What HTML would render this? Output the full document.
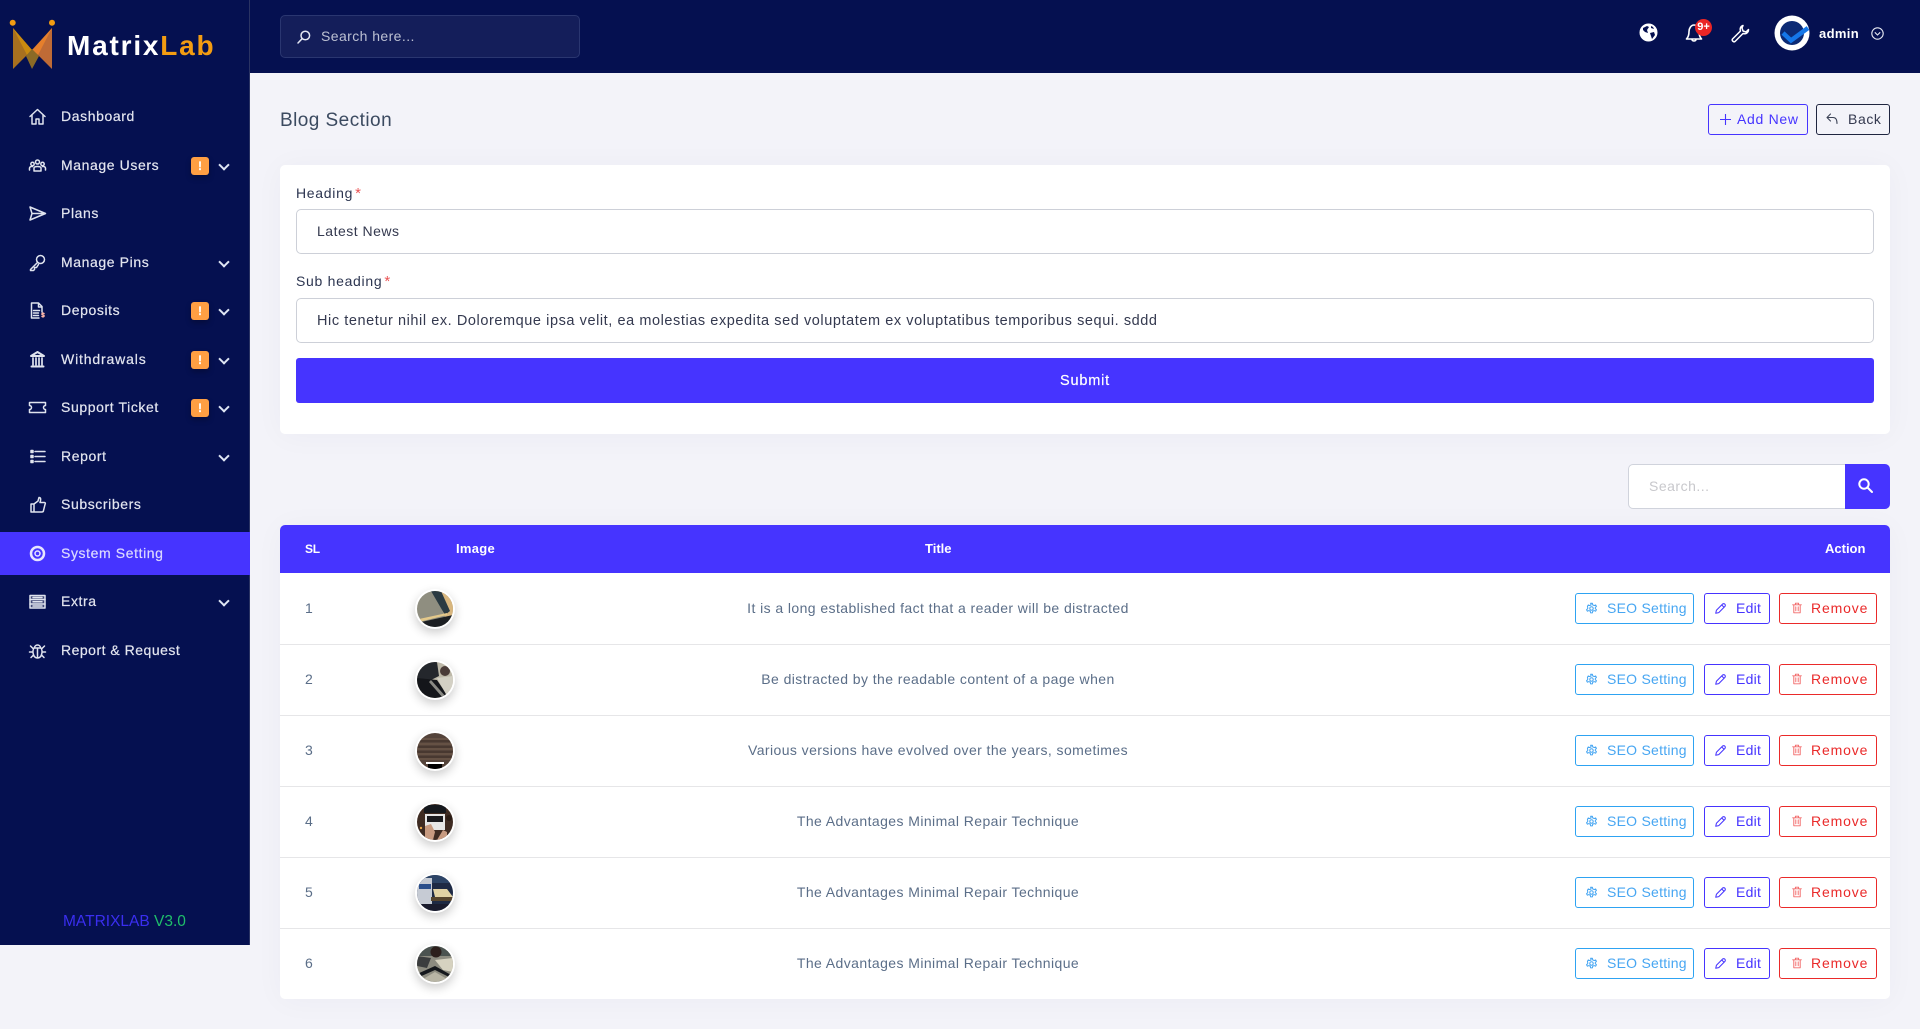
<!DOCTYPE html>
<html lang="en"><head><meta charset="utf-8"><title>Blog Section</title>
<style>
*{box-sizing:border-box;margin:0;padding:0}
html,body{width:1920px;height:1029px;overflow:hidden;background:#f3f3f9;font-family:"Liberation Sans",sans-serif}
.a{position:absolute;white-space:nowrap}
svg{position:absolute;overflow:visible}
#side{position:absolute;left:0;top:0;width:250px;height:945px;background:#051050;border-right:1px solid #2a3363}
#top{position:absolute;left:250px;top:0;width:1670px;height:73px;background:#051050}
.ni{position:absolute;left:0;width:250px;height:43px;color:#e3e5ef;font-size:14px;line-height:43px;-webkit-text-stroke:.2px}
.ni span{position:absolute;left:61px;letter-spacing:.6px;font-weight:400}
.ni svg{left:28px;top:12px;width:19px;height:19px;fill:none;stroke:#dfe3ee;stroke-width:1.5;stroke-linecap:round;stroke-linejoin:round}
.ni b{position:absolute;left:191px;top:13px;width:18px;height:18px;border-radius:3px;background:#ff9f43;color:#fff;font-size:12px;line-height:18px;text-align:center;box-shadow:0 3px 6px rgba(0,0,0,.25)}
.ni i{position:absolute;left:218px;top:20px;width:11px;height:7px}
.ni i:before{content:"";position:absolute;left:2px;top:-3px;width:6px;height:6px;border-right:2px solid #dfe6f4;border-bottom:2px solid #dfe6f4;transform:rotate(45deg)}
.card{position:absolute;left:280px;width:1610px;background:#fff;border-radius:5px;box-shadow:0 2px 30px rgba(40,40,90,.035)}
.inp{position:absolute;left:296px;width:1578px;height:45px;border:1px solid #cdd0d8;border-radius:5px;background:#fff;color:#34394f;font-size:14px;line-height:43px;padding-left:20px;white-space:nowrap}
.lbl{position:absolute;left:296px;color:#2c3550;font-size:14px;line-height:20px;letter-spacing:.7px}
.lbl em{color:#ea5455;font-style:normal;margin-left:2px;font-size:15px}
.row{position:absolute;left:280px;width:1610px;height:72px;border-bottom:1px solid #e6e6e8}
.num{position:absolute;left:25px;top:0;line-height:70px;font-size:14px;color:#5b6e88}
.av{position:absolute;left:135px;top:16px;width:40px;height:40px;border-radius:50%;background:#fff;box-shadow:0 4px 10px rgba(0,0,0,.2)}
.av svg{left:2px;top:2px;width:36px;height:36px}
.tt{position:absolute;left:358px;width:600px;text-align:center;top:0;line-height:70px;font-size:14px;letter-spacing:.42px;color:#5b6e88;white-space:nowrap}
.bt{position:absolute;top:20px;height:31px;border:1px solid;border-radius:3px;font-size:14px;line-height:29px;letter-spacing:.25px;white-space:nowrap}
.bt span{position:absolute}
.bt svg{top:8px;width:13px;height:13px;fill:none;stroke:currentColor;stroke-width:1.2;stroke-linecap:round;stroke-linejoin:round}
.s{left:1295px;width:119px;color:#47a6f2;border-color:#2ea3f2}
.s span{left:31px}.s svg{left:9px}
.e{left:1424px;width:66px;color:#4634ff;border-color:#4634ff}
.e span{left:31px}.e svg{left:9px}
.r{left:1499px;width:98px;color:#ea2a2a;border-color:#ea2a2a;letter-spacing:.85px}
.r span{left:31px}.r svg{left:11px;width:12px;height:12px}
</style></head><body>

<div id="top"></div>
<div id="side"></div>

<svg style="left:0;top:0" width="70" height="80" viewBox="0 0 70 80">
<circle cx="12.700" cy="22.700" r="3" fill="#f39c12"/><circle cx="52" cy="22.700" r="3" fill="#f39c12"/>
<polygon points="13,28 13,69 32,50" fill="#a8701f"/>
<polygon points="52,28 52,69 33,50" fill="#bf6b36"/>
<polygon points="13,28 32,50 27,55" fill="#c98a10"/>
<polygon points="52,28 32,50 38,55" fill="#e57f2c"/>
<polygon points="26,56 32,49 39,56 32,69" fill="#8b6a26"/>
</svg>
<div class="a" style="left:67px;top:28px;font-size:28px;line-height:36px;letter-spacing:1.800px;font-weight:700;color:#fff">Matrix<span style="color:#f39c12">Lab</span></div>

<div class="ni" style="top:95px"><svg viewBox="0 0 19 19"><path d="M2 9.500 9.500 2.500 17 9.500M4 8v9h4v-5h3v5h4V8"/></svg><span>Dashboard</span></div>
<div class="ni" style="top:144px"><svg viewBox="0 0 19 19"><circle cx="9.500" cy="6" r="2"/><circle cx="4.500" cy="8" r="1.700"/><circle cx="14.500" cy="8" r="1.700"/><path d="M6 15v-3c0-2 7-2 7 0v3zM1.500 14v-2c0-1 2-2 3-1.500M17.500 14v-2c0-1-2-2-3-1.500"/></svg><span>Manage Users</span><b>!</b><i></i></div>
<div class="ni" style="top:192px"><svg viewBox="0 0 19 19"><path d="M2 3 17.500 9.500 2 16 4 9.500zM4 9.500h13"/></svg><span>Plans</span></div>
<div class="ni" style="top:241px"><svg viewBox="0 0 19 19"><circle cx="12.500" cy="6.500" r="4"/><path d="M9.500 9.500 2.500 16.500v1h3l1-1v-2h2l2-3"/></svg><span>Manage Pins</span><i></i></div>
<div class="ni" style="top:289px"><svg viewBox="0 0 19 19"><path d="M3.500 17V2h7l3.500 3.500V11M10.500 2v4H14M3.500 17H11M5.500 9.500h6M5.500 12h5M5.500 14.500h5"/><path d="M16 12.500c-2-1-3 1-1 1.500s1 2.500-1 1.500" stroke="#ffb7a8"/></svg><span>Deposits</span><b>!</b><i></i></div>
<div class="ni" style="top:338px"><svg viewBox="0 0 19 19"><path d="M9.500 2 16 6H3zM3.500 16.500h12" stroke-width="2"/><path d="M5 8v7M8 8v7M11 8v7M14 8v7" stroke-width="1.700"/></svg><span style="letter-spacing:.85px">Withdrawals</span><b>!</b><i></i></div>
<div class="ni" style="top:386px"><svg viewBox="0 0 19 19"><path d="M1.500 4.500h16v3a2 2 0 0 0 0 4v3h-16v-3a2 2 0 0 0 0-4z"/></svg><span>Support Ticket</span><b>!</b><i></i></div>
<div class="ni" style="top:435px"><svg viewBox="0 0 19 19"><path d="M7 4.500h10M7 9.500h10M7 14.500h10"/><path d="M3 3.500h2v2H3zM3 8.500h2v2H3zM3 13.500h2v2H3z" fill="#dfe3ee"/></svg><span>Report</span><i></i></div>
<div class="ni" style="top:483px"><svg viewBox="0 0 19 19"><path d="M3 9h3v8H3zM6 9l4-3 1-3.500c2 0 2 2 1 5h4.500c1 0 1 1 .5 2l-1.500 6c0 1-1 1.500-2 1.500H6"/></svg><span>Subscribers</span></div>
<div class="ni" style="top:532px;background:#4634ff;color:#dcd9ff"><svg viewBox="0 0 19 19" style="stroke:#e6e4ff"><circle cx="9.500" cy="9.500" r="6.500" stroke-width="2.500"/><circle cx="9.500" cy="9.500" r="2.500" stroke-width="1.500"/></svg><span>System Setting</span></div>
<div class="ni" style="top:580px"><svg viewBox="0 0 19 19"><rect x="2" y="3.500" width="15" height="12.500" fill="#cfd2dc" fill-opacity=".3"/><path d="M2 7.500h15M2 12h15M5 5.500h9M5 9.800h9M5 14h9"/></svg><span>Extra</span><i></i></div>
<div class="ni" style="top:629px"><svg viewBox="0 0 19 19"><path d="M6 7h7c2 3 1 10-3.500 10S4 10 6 7zM6.500 7c0-4 6-4 6 0M9.500 8v9M2.500 5l3 3M16.500 5l-3 3M1.500 11h3M17.500 11h-3M3 16.500l2.500-2.500M16 16.500 13.500 14"/></svg><span style="letter-spacing:.5px">Report &amp; Request</span></div>

<div class="a" style="left:63px;top:912px;font-size:15.500px;line-height:20px;color:#3a2ef0">MATRIXLAB <span style="color:#1fbf6a">V3.0</span></div>

<!-- top search -->
<div class="a" style="left:280px;top:15px;width:300px;height:43px;background:#141e5a;border:1px solid #2a3670;border-radius:5px"></div>
<svg style="left:297px;top:30px" width="14" height="14" viewBox="0 0 14 14" fill="none" stroke="#e3e6f2" stroke-width="1.500" stroke-linecap="round"><circle cx="8.300" cy="5.500" r="4.300"/><path d="M5 8.800 1 13"/></svg>
<div class="a" style="left:321px;top:26px;font-size:14px;line-height:20px;letter-spacing:.42px;color:#bcc0d2">Search here...</div>

<!-- top right icons -->
<svg style="left:1639px;top:23px" width="19" height="19" viewBox="0 0 19 19"><circle cx="9.500" cy="9.500" r="9" fill="#fff"/><path d="M4 5 8 3l2 1-2 3 1 3-3-1-2-2zM11 10l4-1 1 3-3 4-1-3zM12 3l2 1 1 2-3-1z" fill="#051050"/></svg>
<svg style="left:1684px;top:22px" width="20" height="20" viewBox="0 0 20 20" fill="none" stroke="#fff" stroke-width="1.600" stroke-linecap="round" stroke-linejoin="round"><path d="M2.500 17h15c-2-2-2.500-4-2.500-7.500 0-3-2-6.500-5-6.500S5 6.500 5 9.500c0 3.500-.5 5.500-2.500 7.500zM8 17.500c0 2 4 2 4 0"/></svg>
<div class="a" style="left:1695px;top:19px;width:17px;height:17px;border-radius:50%;background:#ea2525;color:#fff;font-size:11px;line-height:17px;text-align:center;font-weight:700">9+</div>
<svg style="left:1731px;top:24px" width="19" height="19" viewBox="0 0 19 19" fill="none" stroke="#fff" stroke-width="1.500" stroke-linecap="round" stroke-linejoin="round"><path d="M12 1.500c-2 .5-3.500 3-2.500 5.500L1.500 15c-1 1.500 1 3.500 2.500 2.500L12 9.500c3 1 5.500-1 5.500-4L15 8l-3-1-1-3z"/></svg>
<svg style="left:1774px;top:15px" width="36" height="36" viewBox="0 0 36 36"><circle cx="18" cy="18" r="17.500" fill="#fff"/><circle cx="18" cy="18" r="12" fill="#0c2a74"/><path d="M9 18l8 7.500L34 13" fill="none" stroke="#1577e8" stroke-width="4.500"/></svg>
<div class="a" style="left:1819px;top:24px;font-size:13px;line-height:20px;font-weight:700;color:#fff;letter-spacing:.35px">admin</div>
<svg style="left:1871px;top:27px" width="13" height="13" viewBox="0 0 13 13" fill="none" stroke="#e6e8f2" stroke-width="1.100"><circle cx="6.500" cy="6.500" r="5.700"/><path d="M3.800 5.300 6.500 8l2.700-2.700"/></svg>

<!-- title -->
<div class="a" style="left:280px;top:109px;font-size:19px;line-height:24px;color:#3b4a60;letter-spacing:.45px">Blog Section</div>
<div class="a" style="left:1708px;top:104px;width:100px;height:31px;border:1px solid #4634ff;border-radius:3px;background:transparent"></div>
<svg style="left:1719px;top:113px" width="13" height="13" viewBox="0 0 13 13" stroke="#4634ff" stroke-width="1.100"><path d="M6.500 1v11M1 6.500h11"/></svg>
<div class="a" style="left:1737px;top:109px;font-size:14px;line-height:20px;color:#4634ff;letter-spacing:.7px">Add New</div>
<div class="a" style="left:1816px;top:104px;width:74px;height:31px;border:1px solid #1f2540;border-radius:3px"></div>
<svg style="left:1826px;top:113px" width="12" height="12" viewBox="0 0 12 12" fill="none" stroke="#3c4356" stroke-width="1.100" stroke-linecap="round" stroke-linejoin="round"><path d="M4.500 1 1 4.500 4.500 8M1 4.500h6c3 0 4 2.500 4 6"/></svg>
<div class="a" style="left:1848px;top:109px;font-size:14px;line-height:20px;color:#34394f;letter-spacing:.6px">Back</div>

<!-- form -->
<div class="card" style="top:165px;height:269px"></div>
<div class="lbl" style="top:183px">Heading<em>*</em></div>
<div class="inp" style="top:209px;letter-spacing:.5px">Latest News</div>
<div class="lbl" style="top:271px">Sub heading<em>*</em></div>
<div class="inp" style="top:298px;font-size:14.500px;line-height:45px;letter-spacing:.57px">Hic tenetur nihil ex. Doloremque ipsa velit, ea molestias expedita sed voluptatem ex voluptatibus temporibus sequi. sddd</div>
<div class="a" style="left:296px;top:358px;width:1578px;height:45px;background:#4634ff;border-radius:3px;color:#fff;font-size:14.500px;line-height:47px;text-align:center;letter-spacing:.8px;-webkit-text-stroke:.2px">Submit</div>

<!-- search box -->
<div class="a" style="left:1628px;top:464px;width:220px;height:45px;background:#fff;border:1px solid #d0d3dc;border-radius:5px 0 0 5px;color:#c8c8cc;font-size:14px;line-height:43px;padding-left:20px;letter-spacing:.5px">Search...</div>
<div class="a" style="left:1845px;top:464px;width:45px;height:45px;background:#4634ff;border-radius:0 5px 5px 0"></div>
<svg style="left:1858px;top:478px" width="15" height="15" viewBox="0 0 15 15" fill="none" stroke="#fff" stroke-width="2" stroke-linecap="round"><circle cx="6" cy="6" r="4.700"/><path d="M9.500 9.500 14 14"/></svg>

<!-- table -->
<div class="card" style="top:525px;height:474px"></div>
<div class="a" style="left:280px;top:525px;width:1610px;height:48px;background:#4634ff;border-radius:5px 5px 0 0"></div>
<div class="a" style="left:305px;top:539px;font-size:12px;line-height:20px;font-weight:700;color:#fff;letter-spacing:-.2px">SL</div>
<div class="a" style="left:456px;top:539px;font-size:13px;line-height:20px;font-weight:700;color:#fff;letter-spacing:.3px">Image</div>
<div class="a" style="left:925px;top:539px;font-size:13px;line-height:20px;font-weight:700;color:#fff">Title</div>
<div class="a" style="left:1825px;top:539px;font-size:13px;line-height:20px;font-weight:700;color:#fff">Action</div>

<div class="row" style="top:573px"><div class="num">1</div>
<div class="av"><svg viewBox="0 0 36 36"><defs><clipPath id="c"><circle cx="18" cy="18" r="18"/></clipPath></defs><g clip-path="url(#c)"><rect width="36" height="36" fill="#8f8e80"/><polygon points="18,0 36,0 36,24 28,26" fill="#d8b67e"/><polygon points="14,0 24,0 33,20 28,24" fill="#2a3a42"/><polygon points="0,32 36,24 36,36 0,36" fill="#1c1f22"/><polygon points="2,28 30,22 30,24 2,31" fill="#e3c88a"/></g></svg></div>
<div class="tt">It is a long established fact that a reader will be distracted</div>
<div class="bt s"><svg viewBox="0 0 15 15"><circle cx="7.500" cy="7.500" r="2"/><path d="M6.500 1.500h2l.4 1.800 1.600.8 1.700-.7 1 1.700-1.300 1.300v1.200l1.300 1.300-1 1.700-1.700-.7-1.600.8-.4 1.800h-2l-.4-1.800-1.600-.8-1.700.7-1-1.700 1.300-1.300V6.400L2.800 5.100l1-1.700 1.700.7 1.600-.8z"/></svg><span>SEO Setting</span></div>
<div class="bt e"><svg viewBox="0 0 15 15"><path d="M2 13l.8-3.500 7-7a1.500 1.500 0 0 1 2.700 2.700l-7 7zM9 3.500l2.500 2.500"/></svg><span>Edit</span></div>
<div class="bt r"><svg viewBox="0 0 15 15" style="stroke:#f26a6a"><path d="M2 3.500h11M5.500 3.500V1.500h4v2M3.500 3.500v10h8v-10M6 6v5M9 6v5"/></svg><span>Remove</span></div></div>

<div class="row" style="top:644px"><div class="num">2</div>
<div class="av"><svg viewBox="0 0 36 36"><defs><clipPath id="c2"><circle cx="18" cy="18" r="18"/></clipPath></defs><g clip-path="url(#c2)"><rect width="36" height="36" fill="#bdb8a8"/><polygon points="0,0 20,0 22,14 6,22 0,16" fill="#24272c"/><polygon points="0,16 20,18 32,36 0,36" fill="#14161a"/><circle cx="28" cy="9" r="5" fill="#4a3c38"/><polygon points="20,16 36,14 36,30 30,34" fill="#d3d0c4"/><polygon points="14,18 30,36 26,36 12,20" fill="#8a8a84"/></g></svg></div>
<div class="tt">Be distracted by the readable content of a page when</div>
<div class="bt s"><svg viewBox="0 0 15 15"><circle cx="7.500" cy="7.500" r="2"/><path d="M6.500 1.500h2l.4 1.800 1.600.8 1.700-.7 1 1.700-1.300 1.300v1.200l1.300 1.300-1 1.700-1.700-.7-1.600.8-.4 1.800h-2l-.4-1.800-1.600-.8-1.700.7-1-1.700 1.300-1.300V6.400L2.800 5.100l1-1.700 1.700.7 1.600-.8z"/></svg><span>SEO Setting</span></div>
<div class="bt e"><svg viewBox="0 0 15 15"><path d="M2 13l.8-3.500 7-7a1.500 1.500 0 0 1 2.700 2.700l-7 7zM9 3.500l2.500 2.500"/></svg><span>Edit</span></div>
<div class="bt r"><svg viewBox="0 0 15 15" style="stroke:#f26a6a"><path d="M2 3.500h11M5.500 3.500V1.500h4v2M3.500 3.500v10h8v-10M6 6v5M9 6v5"/></svg><span>Remove</span></div></div>

<div class="row" style="top:715px"><div class="num">3</div>
<div class="av"><svg viewBox="0 0 36 36"><defs><clipPath id="c3"><circle cx="18" cy="18" r="18"/></clipPath></defs><g clip-path="url(#c3)"><rect width="36" height="36" fill="#54433a"/><path d="M0 6h36M0 11h36M0 16h36M0 21h36M0 26h36" stroke="#6b5648" stroke-width="1.500"/><path d="M0 8h36M0 14h36M0 19h36M0 24h36" stroke="#3d2e26" stroke-width="1"/><rect x="11" y="31" width="14" height="5" fill="#000"/><rect x="9" y="29" width="18" height="2" fill="#fff"/></g></svg></div>
<div class="tt">Various versions have evolved over the years, sometimes</div>
<div class="bt s"><svg viewBox="0 0 15 15"><circle cx="7.500" cy="7.500" r="2"/><path d="M6.500 1.500h2l.4 1.800 1.600.8 1.700-.7 1 1.700-1.300 1.300v1.200l1.300 1.300-1 1.700-1.700-.7-1.600.8-.4 1.800h-2l-.4-1.800-1.600-.8-1.700.7-1-1.700 1.300-1.300V6.400L2.800 5.100l1-1.700 1.700.7 1.600-.8z"/></svg><span>SEO Setting</span></div>
<div class="bt e"><svg viewBox="0 0 15 15"><path d="M2 13l.8-3.500 7-7a1.500 1.500 0 0 1 2.700 2.700l-7 7zM9 3.500l2.500 2.500"/></svg><span>Edit</span></div>
<div class="bt r"><svg viewBox="0 0 15 15" style="stroke:#f26a6a"><path d="M2 3.500h11M5.500 3.500V1.500h4v2M3.500 3.500v10h8v-10M6 6v5M9 6v5"/></svg><span>Remove</span></div></div>

<div class="row" style="top:786px"><div class="num">4</div>
<div class="av"><svg viewBox="0 0 36 36"><defs><clipPath id="c4"><circle cx="18" cy="18" r="18"/></clipPath></defs><g clip-path="url(#c4)"><rect width="36" height="36" fill="#3e2b22"/><rect x="7" y="1" width="22" height="8" fill="#15181d"/><rect x="8" y="10" width="20" height="16" fill="#e6e6e6"/><rect x="10" y="12" width="16" height="6" fill="#1a1a1e"/><polygon points="8,22 14,20 18,28 16,36 8,36" fill="#c79a80"/><polygon points="26,26 30,28 30,36 20,36" fill="#c79a80"/><circle cx="4" cy="24" r="1.200" fill="#e8a548"/><circle cx="32" cy="14" r="3" fill="#2a1c15"/></g></svg></div>
<div class="tt">The Advantages Minimal Repair Technique</div>
<div class="bt s"><svg viewBox="0 0 15 15"><circle cx="7.500" cy="7.500" r="2"/><path d="M6.500 1.500h2l.4 1.800 1.600.8 1.700-.7 1 1.700-1.300 1.300v1.200l1.300 1.300-1 1.700-1.700-.7-1.600.8-.4 1.800h-2l-.4-1.800-1.600-.8-1.700.7-1-1.700 1.300-1.300V6.400L2.800 5.100l1-1.700 1.700.7 1.600-.8z"/></svg><span>SEO Setting</span></div>
<div class="bt e"><svg viewBox="0 0 15 15"><path d="M2 13l.8-3.500 7-7a1.500 1.500 0 0 1 2.700 2.700l-7 7zM9 3.500l2.500 2.500"/></svg><span>Edit</span></div>
<div class="bt r"><svg viewBox="0 0 15 15" style="stroke:#f26a6a"><path d="M2 3.500h11M5.500 3.500V1.500h4v2M3.500 3.500v10h8v-10M6 6v5M9 6v5"/></svg><span>Remove</span></div></div>

<div class="row" style="top:857px"><div class="num">5</div>
<div class="av"><svg viewBox="0 0 36 36"><defs><clipPath id="c5"><circle cx="18" cy="18" r="18"/></clipPath></defs><g clip-path="url(#c5)"><rect width="36" height="36" fill="#1e2a44"/><rect x="0" y="0" width="36" height="8" fill="#2c4466"/><rect x="0" y="3" width="15" height="26" fill="#c6cbd4"/><rect x="2" y="9" width="12" height="5" fill="#2b4f8c"/><polygon points="16,14 30,14 36,22 36,25 18,22" fill="#e2d2a4"/><rect x="14" y="22" width="22" height="4" fill="#57452e"/><rect x="0" y="29" width="36" height="7" fill="#1a1c2e"/></g></svg></div>
<div class="tt">The Advantages Minimal Repair Technique</div>
<div class="bt s"><svg viewBox="0 0 15 15"><circle cx="7.500" cy="7.500" r="2"/><path d="M6.500 1.500h2l.4 1.800 1.600.8 1.700-.7 1 1.700-1.300 1.300v1.200l1.300 1.300-1 1.700-1.700-.7-1.600.8-.4 1.800h-2l-.4-1.800-1.600-.8-1.700.7-1-1.700 1.300-1.300V6.400L2.800 5.100l1-1.700 1.700.7 1.600-.8z"/></svg><span>SEO Setting</span></div>
<div class="bt e"><svg viewBox="0 0 15 15"><path d="M2 13l.8-3.500 7-7a1.500 1.500 0 0 1 2.700 2.700l-7 7zM9 3.500l2.500 2.500"/></svg><span>Edit</span></div>
<div class="bt r"><svg viewBox="0 0 15 15" style="stroke:#f26a6a"><path d="M2 3.500h11M5.500 3.500V1.500h4v2M3.500 3.500v10h8v-10M6 6v5M9 6v5"/></svg><span>Remove</span></div></div>

<div class="row" style="top:928px;height:71px;border-bottom:0"><div class="num">6</div>
<div class="av"><svg viewBox="0 0 36 36"><defs><clipPath id="c6"><circle cx="18" cy="18" r="18"/></clipPath></defs><g clip-path="url(#c6)"><rect width="36" height="36" fill="#8d8c80"/><rect x="0" y="0" width="36" height="10" fill="#4b5350"/><circle cx="19" cy="6" r="5.500" fill="#2c1f1c"/><polygon points="0,10 14,12 10,22 0,20" fill="#3b3d3e"/><polygon points="18,14 36,12 36,26 26,24" fill="#d6d2c0"/><polygon points="0,28 18,20 36,30 36,33 18,24 0,32" fill="#15181c"/><polygon points="6,33 18,26 30,33 18,36" fill="#b8b5a5"/></g></svg></div>
<div class="tt">The Advantages Minimal Repair Technique</div>
<div class="bt s"><svg viewBox="0 0 15 15"><circle cx="7.500" cy="7.500" r="2"/><path d="M6.500 1.500h2l.4 1.800 1.600.8 1.700-.7 1 1.700-1.300 1.300v1.200l1.300 1.300-1 1.700-1.700-.7-1.600.8-.4 1.800h-2l-.4-1.800-1.600-.8-1.700.7-1-1.700 1.300-1.300V6.400L2.800 5.100l1-1.700 1.700.7 1.600-.8z"/></svg><span>SEO Setting</span></div>
<div class="bt e"><svg viewBox="0 0 15 15"><path d="M2 13l.8-3.500 7-7a1.500 1.500 0 0 1 2.700 2.700l-7 7zM9 3.500l2.500 2.500"/></svg><span>Edit</span></div>
<div class="bt r"><svg viewBox="0 0 15 15" style="stroke:#f26a6a"><path d="M2 3.500h11M5.500 3.500V1.500h4v2M3.500 3.500v10h8v-10M6 6v5M9 6v5"/></svg><span>Remove</span></div></div>

</body></html>
